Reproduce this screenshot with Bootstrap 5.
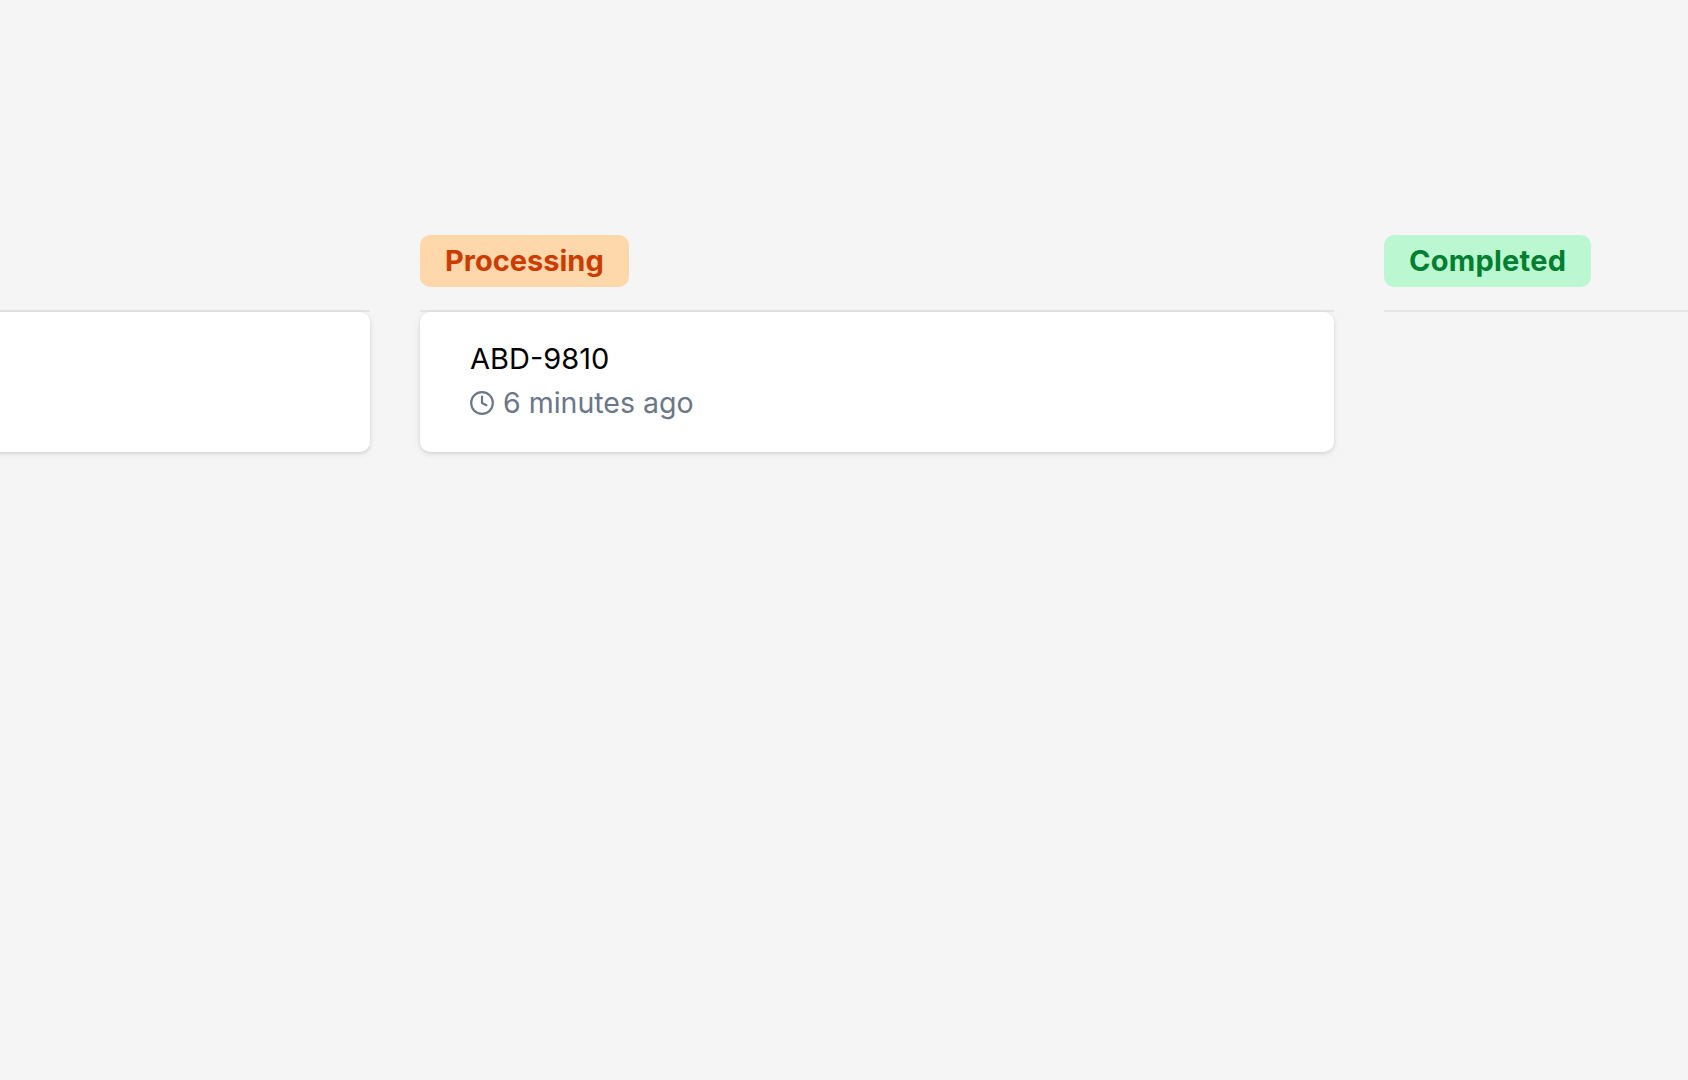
<!DOCTYPE html>
<html lang="en">
<head>
<meta charset="utf-8">
<title>Board</title>
<link href="https://cdn.jsdelivr.net/npm/bootstrap@5.3.0/dist/css/bootstrap.min.css" rel="stylesheet">
<style>
html, body { height: 100%; }
body { background: #f5f5f5; font-family: Inter, "Liberation Sans", sans-serif; overflow: hidden; }
.board-track { margin-left: -544px; padding-top: 235px; gap: 50px; width: 2842px; }
.board-col { width: 914px; flex: 0 0 914px; }
.status-pill { height: 52px; padding: 0 25px; font-size: 29px; font-weight: 700; line-height: 52px; border-radius: 10px; }
.pill-orange { background: #fed7aa; color: #cc3c00; }
.pill-green { background: #bbf7d0; color: #007f30; letter-spacing: .25px; }
.pill-blue { background: #bfdbfe; color: #1d4ed8; }
.col-rule { margin-top: 23px; border-top: 2px solid #e5e5e5; min-height: 142px; }
.job-card { height: 140px; padding: 30px 50px; background: #fff; border-radius: 10px; box-shadow: 0 2px 6px rgba(0,0,0,.1), 0 1px 3px rgba(0,0,0,.07); }
.job-id { font-size: 29px; line-height: 34px; color: #000; }
.job-time { font-size: 28.5px; line-height: 38px; margin-top: 8px; color: #6b7688; gap: 8px; }
.job-time svg { width: 26px; height: 26px; flex: none; margin-left: -1px; }
</style>
</head>
<body>
<main class="d-flex align-items-start board-track">
  <section class="board-col">
    <div class="d-flex"><span class="status-pill pill-blue invisible">Queued</span></div>
    <div class="col-rule"><div class="job-card"></div></div>
  </section>
  <section class="board-col">
    <div class="d-flex"><span class="status-pill pill-orange">Processing</span></div>
    <div class="col-rule">
      <div class="job-card">
        <div class="job-id">ABD-9810</div>
        <div class="job-time d-flex align-items-center">
          <svg viewBox="0 0 24 24" fill="none" stroke="currentColor" stroke-width="2" stroke-linecap="round" stroke-linejoin="round"><circle cx="12" cy="12" r="10"/><path d="M12 6v6l4 2"/></svg>
          <span>6 minutes ago</span>
        </div>
      </div>
    </div>
  </section>
  <section class="board-col">
    <div class="d-flex"><span class="status-pill pill-green">Completed</span></div>
    <div class="col-rule"></div>
  </section>
</main>
<script src="https://cdn.jsdelivr.net/npm/bootstrap@5.3.0/dist/js/bootstrap.bundle.min.js"></script>
</body>
</html>
